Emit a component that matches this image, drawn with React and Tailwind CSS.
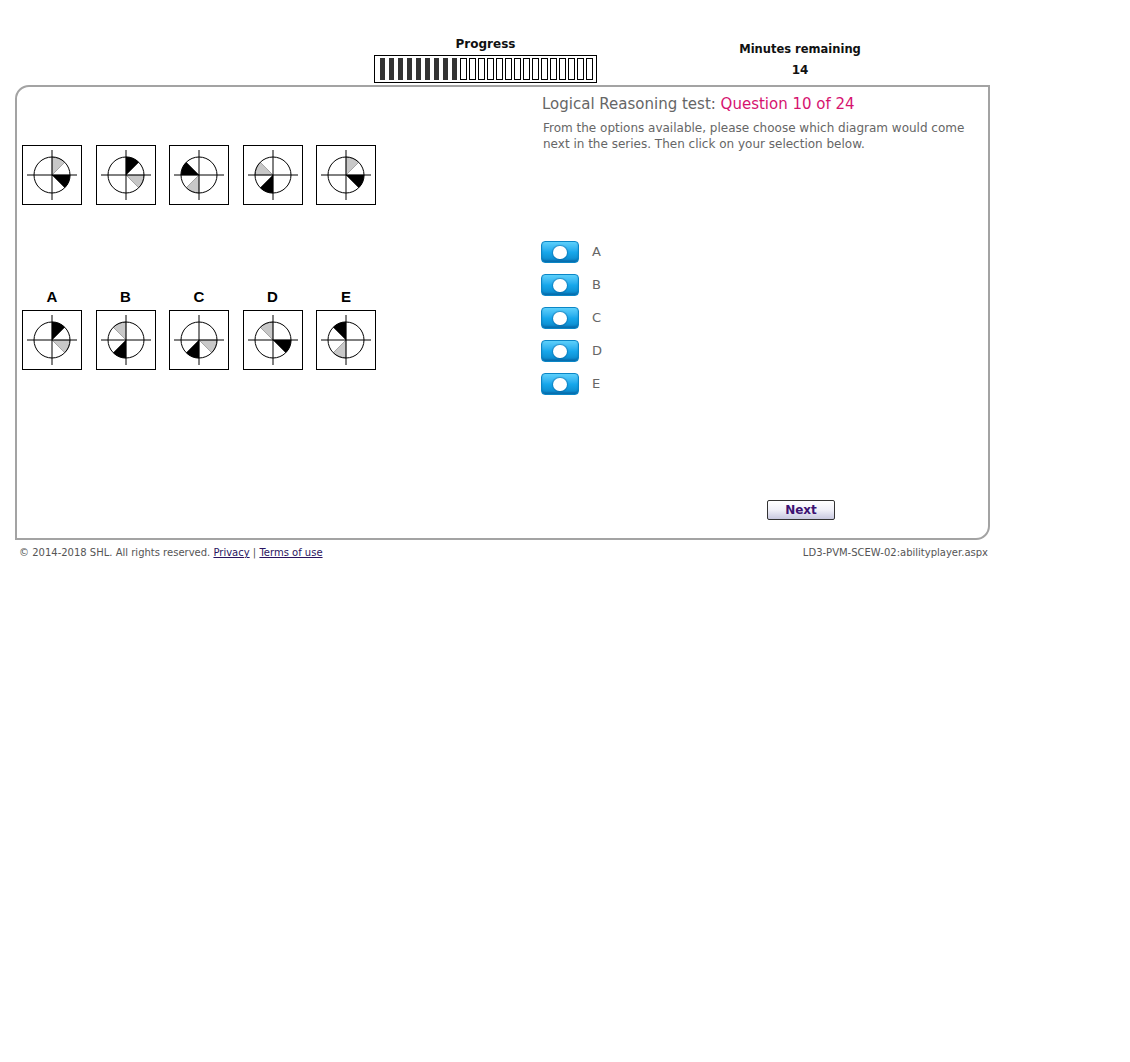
import React from "react";

const R = 18;

// sector index: 0 = N..NE, 1 = NE..E, 2 = E..SE, ... clockwise, 45deg each
const pt = (deg) => {
    const a = (deg * Math.PI) / 180;
    return [30 + R * Math.sin(a), 30 - R * Math.cos(a)];
};

const sectorPath = (i) => {
    const [x1, y1] = pt(i * 45);
    const [x2, y2] = pt(i * 45 + 45);
    return `M30 30 L${x1.toFixed(2)} ${y1.toFixed(2)} A${R} ${R} 0 0 1 ${x2.toFixed(2)} ${y2.toFixed(2)} Z`;
};

const Diagram = ({ black, gray }) => (
    <div className="w-[60px] h-[60px] border border-black bg-white">
        <svg width="58" height="58" viewBox="1 1 58 58">
            <circle cx="30" cy="30" r={R} fill="white" />
            <path d={sectorPath(gray)} fill="#c8c8c8" stroke="#666" strokeWidth="0.5" />
            <path d={sectorPath(black)} fill="black" stroke="black" strokeWidth="0.5" />
            <circle cx="30" cy="30" r={R} fill="none" stroke="black" strokeWidth="1" />
            <line x1="5" y1="30" x2="55" y2="30" stroke="black" strokeWidth="1" />
            <line x1="30" y1="5" x2="30" y2="55" stroke="black" strokeWidth="1" />
        </svg>
    </div>
);

const series = [
    { gray: 0, black: 2 },
    { black: 0, gray: 2 },
    { black: 6, gray: 4 },
    { gray: 6, black: 4 },
    { gray: 0, black: 2 },
];

const options = [
    { label: "A", black: 0, gray: 2 },
    { label: "B", gray: 7, black: 4 },
    { label: "C", gray: 2, black: 4 },
    { label: "D", gray: 7, black: 2 },
    { label: "E", black: 7, gray: 4 },
];

const Radio = ({ label }) => (
    <div className="flex items-center h-[22px]">
        <div className="w-[38px] h-[22px] rounded-[4px] bg-gradient-to-b from-[#5cd0fb] via-[#17a8ec] to-[#0a86c8] border border-[#0b86c6] shadow-[inset_0_-2px_2px_rgba(0,60,120,0.35)] flex items-center justify-center">
            <div className="w-[14px] h-[13px] rounded-full bg-white shadow-[0_0_1px_1px_rgba(0,80,140,0.4)]"></div>
        </div>
        <span className="ml-[13px] text-[13px] text-[#666]">{label}</span>
    </div>
);

export default function App() {
    const filled = 9;
    return (
        <div className="w-[1130px] min-h-[1062px] bg-white font-['DejaVu_Sans',Verdana,sans-serif]">
            <div className="ml-[15px] w-[975px]">
                {/* header */}
                <div className="flex pt-[37px] h-[85px]">
                    <div className="ml-[359px] w-[223px] flex flex-col items-center">
                        <div className="text-[12px] font-bold text-[#111] leading-[15px]">Progress</div>
                        <div className="mt-[3px] w-[223px] h-[28px] border border-black flex items-center gap-[2px] pl-[4px]">
                            {Array.from({ length: 24 }).map((_, i) =>
                                i < filled ? (
                                    <div key={i} className="w-[7px] h-[22px] bg-[#333] border-x border-white"></div>
                                ) : (
                                    <div key={i} className="w-[7px] h-[22px] border border-black bg-white"></div>
                                )
                            )}
                        </div>
                    </div>
                    <div className="ml-[113px] w-[180px] flex flex-col items-center pt-[5px]">
                        <div className="text-[11.5px] font-bold text-[#111] leading-[15px]">Minutes remaining</div>
                        <div className="mt-[6px] text-[12px] font-bold text-[#111] leading-[15px]">14</div>
                    </div>
                </div>

                {/* main box */}
                <div className="h-[455px] border-2 border-[#a3a3a3] rounded-tl-[14px] rounded-br-[14px] flex">
                    <div className="w-[525px] pl-[5px] pt-[58px]">
                        <div className="flex gap-[13.5px]">
                            {series.map((d, i) => (
                                <Diagram key={i} black={d.black} gray={d.gray} />
                            ))}
                        </div>
                        <div className="mt-[83px] flex gap-[13.5px]">
                            {options.map((o) => (
                                <div key={o.label} className="flex flex-col items-center">
                                    <div className="font-['Liberation_Sans',Arial,sans-serif] font-bold text-[15px] leading-[17px] text-black">
                                        {o.label}
                                    </div>
                                    <div className="mt-[5px]">
                                        <Diagram black={o.black} gray={o.gray} />
                                    </div>
                                </div>
                            ))}
                        </div>
                    </div>

                    <div className="flex-1 pt-[8px] pr-[8px] relative">
                        <div className="text-[15px] leading-[18px] text-[#666]">
                            Logical Reasoning test: <span className="text-[#d6136f]">Question 10 of 24</span>
                        </div>
                        <p className="mt-[7px] ml-[1px] text-[12px] leading-[16px] text-[#666]">
                            From the options available, please choose which diagram would come next in the series. Then click on your selection below.
                        </p>
                        <div className="mt-[89px] -ml-[1px] flex flex-col gap-[11px]">
                            {["A", "B", "C", "D", "E"].map((l) => (
                                <Radio key={l} label={l} />
                            ))}
                        </div>
                        <div className="mt-[102px] ml-[225px]">
                            <button className="w-[68px] h-[20px] rounded-[2px] border border-[#333] bg-gradient-to-b from-white via-[#f0f0f8] to-[#c8c8e0] text-[12px] font-bold text-[#3d1273] leading-[18px]">
                                Next
                            </button>
                        </div>
                    </div>
                </div>

                {/* footer */}
                <div className="flex justify-between pt-[6px] pl-[4px] pr-[2px] text-[10px] text-[#555] leading-[13px]">
                    <div>
                        © 2014-2018 SHL. All rights reserved.{" "}
                        <a className="underline text-[#2a1460]">Privacy</a> | <a className="underline text-[#2a1460]">Terms of use</a>
                    </div>
                    <div>LD3-PVM-SCEW-02:abilityplayer.aspx</div>
                </div>
            </div>
        </div>
    );
}
